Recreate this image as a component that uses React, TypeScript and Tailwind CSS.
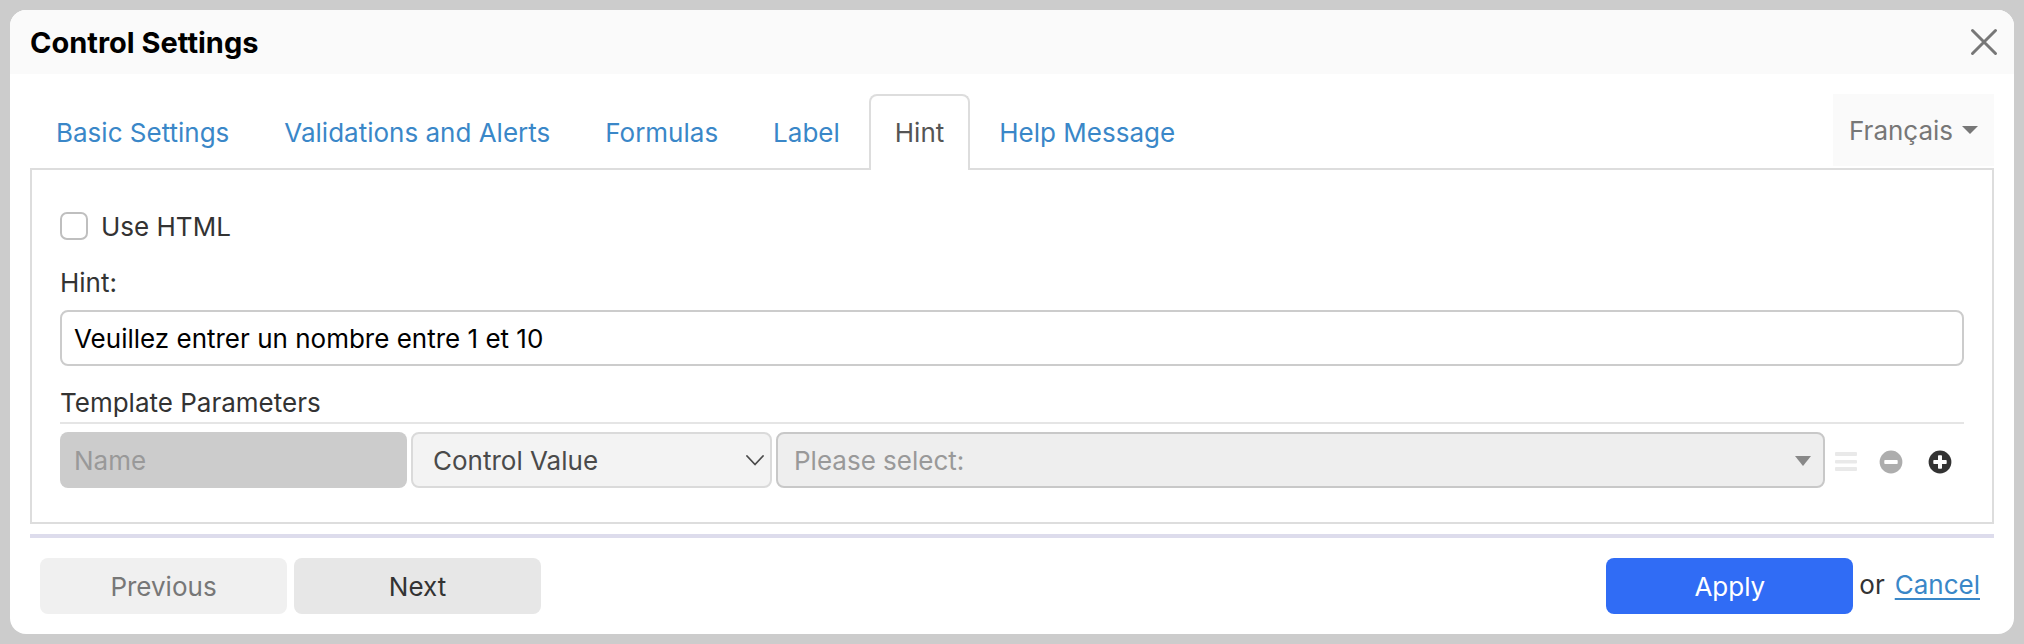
import { useState } from "react";

const tabs = [
  "Basic Settings",
  "Validations and Alerts",
  "Formulas",
  "Label",
  "Hint",
  "Help Message",
];

function Caret({ className }: { className: string }) {
  return (
    <svg viewBox="0 0 16 10" preserveAspectRatio="none" className={className} aria-hidden="true">
      <path d="M0 0H16L8 10Z" fill="currentColor" />
    </svg>
  );
}

export default function App() {
  const [active, setActive] = useState("Hint");
  return (
    <div className="min-h-screen bg-[#ccc] p-2.5 font-['Inter',sans-serif] text-[26px] leading-8 text-[#333]">
      <section
        role="dialog"
        aria-labelledby="dialog-title"
        className="overflow-hidden rounded-2xl bg-white"
      >
        <header className="flex h-16 items-center justify-between bg-[#fafafa] pr-4 pl-5">
          <h1 id="dialog-title" className="pt-0.5 text-[29px] font-bold text-black">
            Control Settings
          </h1>
          <button type="button" aria-label="Close" className="text-[#777]">
            <svg viewBox="0 0 28 28" className="size-7" fill="none" stroke="currentColor" strokeWidth="3" strokeLinecap="round" aria-hidden="true">
              <path d="M2.5 2.5L25.5 25.5M25.5 2.5L2.5 25.5" />
            </svg>
          </button>
        </header>

        <div className="px-5 pt-5">
          <div className="flex items-start justify-between">
            <nav className="z-10 -mb-0.5 flex gap-[3px]">
              {tabs.map((tab) => (
                <a
                  key={tab}
                  href="#"
                  onClick={(e) => {
                    e.preventDefault();
                    setActive(tab);
                  }}
                  className={
                    tab === active
                      ? "flex h-[76px] items-center rounded-t-lg border-2 border-b-0 border-[#ddd] bg-white px-6 text-[#555]"
                      : "flex h-[76px] items-center border-2 border-b-0 border-transparent px-6 text-[#3a87c8]"
                  }
                >
                  {tab}
                </a>
              ))}
            </nav>
            <div className="relative text-[#777]">
              <select
                aria-label="Language"
                className="h-[72px] appearance-none bg-[#fafafa] pt-0.5 pr-10 pl-4"
                defaultValue="fr"
              >
                <option value="fr">Français</option>
              </select>
              <Caret className="pointer-events-none absolute top-8 right-4 h-2 w-4" />
            </div>
          </div>

          <div className="border-2 border-[#ddd] px-7 pt-10 pb-[34px]">
            <div className="flex h-8 items-center gap-[13px]">
              <input
                id="use-html"
                type="checkbox"
                className="size-7 appearance-none rounded-[7px] border-2 border-[#bfbfbf] bg-white checked:bg-[#2f6df6]"
              />
              <label htmlFor="use-html" className="pt-0.5">
                Use HTML
              </label>
            </div>
            <label htmlFor="hint" className="mt-[25px] block">
              Hint:
            </label>
            <input
              id="hint"
              type="text"
              defaultValue="Veuillez entrer un nombre entre 1 et 10"
              className="mt-[11px] block h-14 w-full rounded-lg border-2 border-[#ccc] bg-white px-3 text-black"
            />
            <h2 className="mt-[21px] border-b-2 border-[#e5e5e5] pb-[3px]">Template Parameters</h2>
            <div className="mt-2 flex items-center">
              <input
                type="text"
                aria-label="Name"
                placeholder="Name"
                disabled
                className="h-14 w-[347px] rounded-lg bg-[#ccc] px-3.5 placeholder:text-[#999]"
              />
              <div className="relative ml-1 w-[361px]">
                <select
                  aria-label="Parameter type"
                  className="block h-14 w-full appearance-none rounded-lg border-2 border-[#dadada] bg-[#f3f3f3] px-5 pt-0.5 text-[#4a4a4a]"
                >
                  <option>Control Value</option>
                </select>
                <svg viewBox="0 0 18 11" className="pointer-events-none absolute top-[23px] right-2 h-[11px] w-[18px]" fill="none" stroke="#4a4a4a" strokeWidth="1.8" strokeLinecap="round" strokeLinejoin="round" aria-hidden="true">
                  <path d="M1 1L9 9.5L17 1" />
                </svg>
              </div>
              <div className="relative ml-1 flex-1">
                <select
                  aria-label="Control"
                  className="block h-14 w-full appearance-none rounded-lg border-2 border-[#c8c8c8] bg-[#eee] px-4 pt-0.5 text-[#999]"
                >
                  <option>Please select:</option>
                </select>
                <Caret className="pointer-events-none absolute top-6 right-3.5 h-2.5 w-4 text-[#888]" />
              </div>
              <div className="ml-2.5 flex items-center pt-1 pr-3">
                <button type="button" aria-label="Row menu" className="mr-[22px] text-[#e9e9e9]">
                  <svg viewBox="0 0 22 24" className="h-6 w-[22px]" fill="currentColor" aria-hidden="true">
                    <rect y="2" width="22" height="4" rx="1" />
                    <rect y="10" width="22" height="3.5" rx="1" />
                    <rect y="17" width="22" height="4" rx="1" />
                  </svg>
                </button>
                <button type="button" aria-label="Remove row" className="mr-[25px] text-[#adadad]">
                  <svg viewBox="0 0 24 24" className="size-6" aria-hidden="true">
                    <circle cx="12" cy="12" r="11.4" fill="currentColor" />
                    <rect x="5.3" y="10" width="13.4" height="4" rx="0.8" fill="#fff" />
                  </svg>
                </button>
                <button type="button" aria-label="Add row" className="text-[#333]">
                  <svg viewBox="0 0 24 24" className="size-6" aria-hidden="true">
                    <circle cx="12" cy="12" r="11.4" fill="currentColor" />
                    <rect x="5.3" y="10" width="13.4" height="4" rx="0.8" fill="#fff" />
                    <rect x="10" y="5.3" width="4" height="13.4" rx="0.8" fill="#fff" />
                  </svg>
                </button>
              </div>
            </div>
          </div>

          <footer className="mt-2.5 flex items-center justify-between border-t-4 border-[#dddcec] px-2.5 py-5">
            <div className="flex gap-[7px]">
              <button type="button" disabled className="h-14 w-[247px] rounded-lg bg-[#f0f0f0] pt-0.5 text-[#777]">
                Previous
              </button>
              <button type="button" className="h-14 w-[247px] rounded-lg bg-[#e7e7e7] pt-0.5">
                Next
              </button>
            </div>
            <div className="flex items-center pr-1">
              <button type="button" className="h-14 w-[247px] rounded-lg bg-[#306cf5] pt-0.5 text-white">
                Apply
              </button>
              <span className="ml-1.5 pb-0.5">or</span>
              <a href="#" className="ml-2.5 pb-0.5 text-[#3a87c8] underline decoration-2 underline-offset-4">
                Cancel
              </a>
            </div>
          </footer>
        </div>
      </section>
    </div>
  );
}
